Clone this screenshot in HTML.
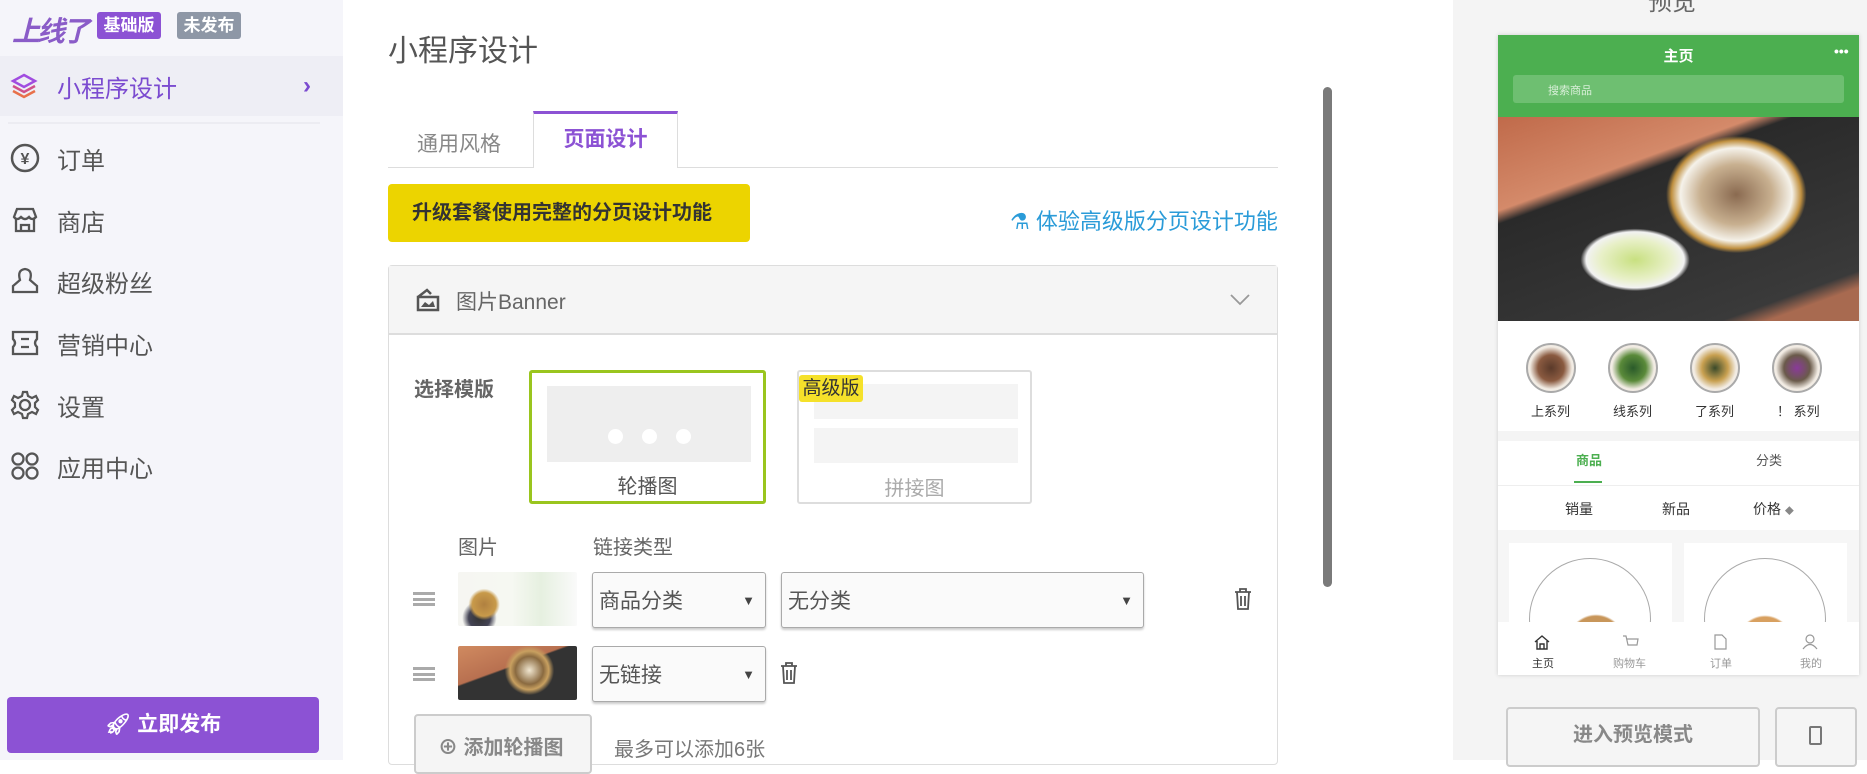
<!DOCTYPE html>
<html><head><meta charset="utf-8"><style>
*{box-sizing:border-box;margin:0;padding:0}
body{width:1867px;height:760px;overflow:hidden;background:#fff;font-family:"Liberation Sans","Noto Sans CJK SC",sans-serif;position:relative;color:#555}
.a{position:absolute}
#side{left:0;top:0;width:343px;height:760px;background:#f5f5fa}
.item{position:absolute;left:0;width:343px;height:60px;display:flex;align-items:center;font-size:24px;color:#555}
.item svg{position:absolute;left:10px}
.item span{position:absolute;left:57px}
#right{left:1453px;top:0;width:414px;height:760px;background:#f4f4f4}
.sel{position:absolute;border:1px solid #aaa;border-radius:3px;background:#fafafa;box-shadow:0 2px 2px #ccc;font-size:21px;color:#555;padding-left:6px;display:flex;align-items:center}
.sel:after{content:"▼";position:absolute;right:10px;font-size:13px;color:#444}
</style></head><body>
<div id="side" class="a">
 <div class="a" style="left:12px;top:10px;font-size:28px;font-weight:bold;font-style:italic;color:#8a5cc8;letter-spacing:-3px">上线了</div>
 <div class="a" style="left:97px;top:12px;width:64px;height:27px;background:#8c52d4;border-radius:3px;color:#fff;font-size:17px;font-weight:bold;text-align:center;line-height:27px">基础版</div>
 <div class="a" style="left:177px;top:12px;width:64px;height:27px;background:#8e97a6;border-radius:3px;color:#fff;font-size:17px;font-weight:bold;text-align:center;line-height:27px">未发布</div>
 <div class="item" style="top:56px;height:60px;background:#eeeef5;color:#7b4bd0"><svg width="28" height="28" viewBox="0 0 28 28"><path d="M14 3 L25 9 L14 15 L3 9Z" fill="none" stroke="#a04ce0" stroke-width="2.5"/><path d="M3 14 L14 20 L25 14" fill="none" stroke="#d0508a" stroke-width="2.5"/><path d="M3 19 L14 25 L25 19" fill="none" stroke="#e8704a" stroke-width="2.5"/></svg><span style="color:#7b4bd0">小程序设计</span><b style="position:absolute;left:303px;color:#7b4bd0;font-size:24px">›</b></div>
 <div class="a" style="left:8px;top:122px;width:312px;height:2px;background:#ececf2"></div>
 <div class="item" style="top:128px"><svg width="30" height="30" viewBox="0 0 30 30"><circle cx="15" cy="15" r="13" fill="none" stroke="#555" stroke-width="2.5"/><text x="15" y="21" font-size="16" text-anchor="middle" fill="#555" font-weight="bold">¥</text></svg><span>订单</span></div>
 <div class="item" style="top:190px"><svg width="30" height="30" viewBox="0 0 30 30"><path d="M4 12 L7 4 H23 L26 12 Q22 16 19 12 Q15 16 11 12 Q7 16 4 12Z M6 14 V26 H24 V14 M11 26 V20 H19 V26" fill="none" stroke="#555" stroke-width="2.3"/></svg><span>商店</span></div>
 <div class="item" style="top:251px"><svg width="30" height="30" viewBox="0 0 30 30"><path d="M10 14 Q7 4 15 3 Q23 4 20 14 L27 20 V26 H3 V20Z" fill="none" stroke="#555" stroke-width="2.3"/></svg><span>超级粉丝</span></div>
 <div class="item" style="top:313px"><svg width="30" height="30" viewBox="0 0 30 30"><path d="M3 4 H27 V11 Q23 15 27 19 V26 H3 V19 Q7 15 3 11Z M11 11 H19 M11 19 H19" fill="none" stroke="#555" stroke-width="2.3"/></svg><span>营销中心</span></div>
 <div class="item" style="top:375px"><svg width="30" height="30" viewBox="0 0 30 30"><circle cx="15" cy="15" r="5" fill="none" stroke="#555" stroke-width="2.3"/><path d="M13 2 H17 L18 6 L22 8 L26 6 L28 10 L25 13 V17 L28 20 L26 24 L22 22 L18 24 L17 28 H13 L12 24 L8 22 L4 24 L2 20 L5 17 V13 L2 10 L4 6 L8 8 L12 6Z" fill="none" stroke="#555" stroke-width="2.2"/></svg><span>设置</span></div>
 <div class="item" style="top:436px"><svg width="30" height="30" viewBox="0 0 30 30"><circle cx="8" cy="8" r="5.5" fill="none" stroke="#555" stroke-width="2.3"/><circle cx="22" cy="8" r="5.5" fill="none" stroke="#555" stroke-width="2.3"/><circle cx="8" cy="22" r="5.5" fill="none" stroke="#555" stroke-width="2.3"/><circle cx="22" cy="22" r="5.5" fill="none" stroke="#555" stroke-width="2.3"/></svg><span>应用中心</span></div>
 <div class="a" style="left:7px;top:697px;width:312px;height:56px;background:#8c52d4;border-radius:4px;color:#fff;font-size:21px;font-weight:bold;text-align:center;line-height:56px">🚀︎ 立即发布</div>
</div>

<div class="a" style="left:388px;top:26px;font-size:30px;color:#555">小程序设计</div>
<div class="a" style="left:388px;top:167px;width:890px;height:1px;background:#ddd"></div>
<div class="a" style="left:417px;top:128px;font-size:21px;color:#888">通用风格</div>
<div class="a" style="left:533px;top:111px;width:145px;height:57px;background:#fff;border:1px solid #ddd;border-top:3px solid #8c52d4;border-bottom:none;font-size:21px;font-weight:bold;color:#8c52d4;text-align:center;line-height:52px">页面设计</div>
<div class="a" style="left:388px;top:184px;width:362px;height:58px;background:#ecd400;border-radius:4px;font-size:20px;font-weight:bold;color:#333;padding-left:24px;line-height:58px">升级套餐使用完整的分页设计功能</div>
<div class="a" style="left:1010px;top:204px;font-size:22px;color:#2a9bd8">⚗︎ 体验高级版分页设计功能</div>

<div class="a" style="left:388px;top:265px;width:890px;height:500px;border:1px solid #ddd;border-radius:4px">
 <div style="height:69px;background:#f5f5f5;border-bottom:2px solid #ddd;position:relative">
  <svg class="a" style="left:26px;top:22px" width="26" height="24" viewBox="0 0 26 24"><path d="M3 9 H23 V22 H3Z M3 9 L12 2 L16 6" fill="none" stroke="#555" stroke-width="2.5"/><path d="M6 19 L10 14 L14 17 L18 13 L20 19Z" fill="#555"/></svg>
  <div class="a" style="left:67px;top:20px;font-size:21px;color:#666">图片Banner</div>
  <svg class="a" style="left:840px;top:27px" width="22" height="14"><path d="M2 2 L11 11 L20 2" fill="none" stroke="#999" stroke-width="1.8"/></svg>
 </div>
</div>
<div class="a" style="left:414px;top:373px;font-size:20px;font-weight:bold;color:#666">选择模版</div>
<div class="a" style="left:529px;top:370px;width:237px;height:134px;border:3px solid #9ac51e;border-radius:3px;background:#fff">
 <div class="a" style="left:15px;top:13px;width:204px;height:76px;background:#eee"></div>
 <div class="a" style="left:76px;top:56px;width:15px;height:15px;border-radius:50%;background:#fff"></div>
 <div class="a" style="left:110px;top:56px;width:15px;height:15px;border-radius:50%;background:#fff"></div>
 <div class="a" style="left:144px;top:56px;width:15px;height:15px;border-radius:50%;background:#fff"></div>
 <div class="a" style="left:0;width:231px;top:97px;text-align:center;font-size:20px;color:#555">轮播图</div>
</div>
<div class="a" style="left:797px;top:370px;width:235px;height:134px;border:2px solid #ddd;border-radius:3px;background:#fff">
 <div class="a" style="left:15px;top:12px;width:204px;height:35px;background:#f4f4f4"></div>
 <div class="a" style="left:15px;top:56px;width:204px;height:35px;background:#f4f4f4"></div>
 <div class="a" style="left:0;top:3px;width:64px;height:27px;background:#f5e12a;border-radius:3px;font-size:19px;color:#333;text-align:center;line-height:27px">高级版</div>
 <div class="a" style="left:0;width:231px;top:100px;text-align:center;font-size:20px;color:#aaa">拼接图</div>
</div>
<div class="a" style="left:458px;top:531px;font-size:20px;color:#666">图片</div>
<div class="a" style="left:593px;top:531px;font-size:20px;color:#666">链接类型</div>
<div class="a" style="left:413px;top:592px;width:22px;height:14px;border-top:3px solid #aaa;border-bottom:3px solid #aaa"><div style="margin-top:3px;height:3px;background:#aaa"></div></div>
<div class="a" style="left:458px;top:572px;width:119px;height:54px;background:radial-gradient(circle at 22% 60%,#b08040 0,#c89a4a 12%,transparent 16%),radial-gradient(circle at 18% 85%,#333 0,#445 10%,transparent 16%),linear-gradient(90deg,#f6f6f2,#f6f8f2 45%,#e6f0e0 70%,#fafafa);border-radius:2px"></div>
<div class="sel" style="left:592px;top:572px;width:174px;height:56px">商品分类</div>
<div class="sel" style="left:781px;top:572px;width:363px;height:56px">无分类</div>
<svg class="a" style="left:1234px;top:588px" width="18" height="22" viewBox="0 0 18 22"><path d="M1 4 H17 M6 4 V1 H12 V4 M3 4 L4 21 H14 L15 4 M7 8 V18 M11 8 V18" fill="none" stroke="#555" stroke-width="1.8"/></svg>
<div class="a" style="left:413px;top:667px;width:22px;height:14px;border-top:3px solid #aaa;border-bottom:3px solid #aaa"><div style="margin-top:3px;height:3px;background:#aaa"></div></div>
<div class="a" style="left:458px;top:646px;width:119px;height:54px;background:radial-gradient(circle at 60% 45%,#f0e6d0 0,#8a6a40 18%,#c8a060 25%,transparent 32%),linear-gradient(160deg,#d08a60 0,#b87050 40%,#333 42%,#333);border-radius:2px"></div>
<div class="sel" style="left:592px;top:646px;width:174px;height:56px">无链接</div>
<svg class="a" style="left:780px;top:662px" width="18" height="22" viewBox="0 0 18 22"><path d="M1 4 H17 M6 4 V1 H12 V4 M3 4 L4 21 H14 L15 4 M7 8 V18 M11 8 V18" fill="none" stroke="#555" stroke-width="1.8"/></svg>
<div class="a" style="left:414px;top:714px;width:178px;height:60px;border:2px solid #ccc;border-radius:4px;background:#f5f5f5;font-size:20px;font-weight:bold;color:#888;padding:15px 0 0 22px">⊕ 添加轮播图</div>
<div class="a" style="left:614px;top:733px;font-size:20px;color:#777">最多可以添加6张</div>
<div class="a" style="left:1323px;top:87px;width:9px;height:500px;background:#7a7a7a;border-radius:5px"></div>

<div id="right" class="a">
 <div class="a" style="left:195px;top:-18px;font-size:24px;color:#666">预览</div>
 <div class="a" style="left:45px;top:35px;width:361px;height:640px;background:#fff;box-shadow:0 0 4px #ccc;overflow:hidden">
  <div class="a" style="left:0;top:0;width:361px;height:82px;background:#4caf50"></div>
  <div class="a" style="left:0;top:10px;width:361px;text-align:center;color:#fff;font-size:15px;font-weight:bold">主页</div>
  <div class="a" style="left:336px;top:8px;color:#fff;font-size:14px;font-weight:bold">•••</div>
  <div class="a" style="left:15px;top:40px;width:331px;height:28px;background:#6ebf71;border-radius:3px;font-size:11px;color:#d8efd8;padding:7px 0 0 35px">搜索商品</div>
  <div class="a" style="left:0;top:82px;width:361px;height:204px;background:radial-gradient(ellipse 90px 75px at 66% 38%,#8a6a50 0,#c8b090 40%,#f5f2ea 62%,#c09040 72%,transparent 78%),radial-gradient(ellipse 70px 40px at 38% 70%,#c8e080 0,#e8f0c8 50%,#f2f2f2 70%,transparent 78%),linear-gradient(160deg,#c06a4a 0,#d48a6a 28%,#2a2a2a 32%,#3a3a3a 85%,#a86a50 90%)"></div>
  <div class="a" style="left:0;top:286px;width:361px;height:110px;background:#fff"></div>
  <div class="a" style="left:28px;top:308px;width:50px;height:50px;border-radius:50%;border:2px solid #aaa;background:radial-gradient(#5a3a2a 0,#8a5a40 40%,#f2ece4 65%)"></div>
  <div class="a" style="left:110px;top:308px;width:50px;height:50px;border-radius:50%;border:2px solid #aaa;background:radial-gradient(#2a5a2a 0,#5a8a3a 40%,#f2ece4 65%)"></div>
  <div class="a" style="left:192px;top:308px;width:50px;height:50px;border-radius:50%;border:2px solid #aaa;background:radial-gradient(#3a4a2a 0,#c8a050 40%,#f2ece4 65%)"></div>
  <div class="a" style="left:274px;top:308px;width:50px;height:50px;border-radius:50%;border:2px solid #aaa;background:radial-gradient(#8a3a9a 0,#6a5a4a 40%,#f2ece4 65%)"></div>
  <div class="a" style="left:33px;top:366px;font-size:13px;color:#333">上系列</div>
  <div class="a" style="left:115px;top:366px;font-size:13px;color:#333">线系列</div>
  <div class="a" style="left:197px;top:366px;font-size:13px;color:#333">了系列</div>
  <div class="a" style="left:279px;top:366px;font-size:13px;color:#333">！ 系列</div>
  <div class="a" style="left:0;top:396px;width:361px;height:10px;background:#f4f4f4"></div>
  <div class="a" style="left:78px;top:415px;font-size:13px;color:#4caf50;font-weight:bold">商品</div>
  <div class="a" style="left:76px;top:446px;width:28px;height:2px;background:#4caf50"></div>
  <div class="a" style="left:258px;top:415px;font-size:13px;color:#555">分类</div>
  <div class="a" style="left:0;top:450px;width:361px;height:1px;background:#eee"></div>
  <div class="a" style="left:67px;top:464px;font-size:14px;color:#333">销量</div>
  <div class="a" style="left:164px;top:464px;font-size:14px;color:#333">新品</div>
  <div class="a" style="left:255px;top:464px;font-size:14px;color:#333">价格 <span style="font-size:9px;color:#888">◆</span></div>
  <div class="a" style="left:0;top:495px;width:361px;height:127px;background:#f6f6f6"></div>
  <div class="a" style="left:11px;top:508px;width:163px;height:120px;background:#fff"><div class="a" style="left:20px;top:15px;width:122px;height:122px;border-radius:50%;border:1px solid #aaa;background:radial-gradient(circle at 55% 70%,#c8965a 0,#c8965a 25%,#fff 27%)"></div></div>
  <div class="a" style="left:186px;top:508px;width:163px;height:120px;background:#fff"><div class="a" style="left:20px;top:15px;width:122px;height:122px;border-radius:50%;border:1px solid #aaa;background:radial-gradient(circle at 50% 70%,#d8a060 0,#d8a060 25%,#fff 27%)"></div></div>
  <div class="a" style="left:0;top:587px;width:361px;height:53px;background:#fff"></div>
  <div class="a" style="left:34px;top:620px;font-size:11px;color:#333">主页</div>
  <div class="a" style="left:115px;top:620px;font-size:11px;color:#999">购物车</div>
  <div class="a" style="left:212px;top:620px;font-size:11px;color:#999">订单</div>
  <div class="a" style="left:302px;top:620px;font-size:11px;color:#999">我的</div>
  <svg class="a" style="left:35px;top:599px" width="18" height="16"><path d="M2 8 L9 2 L16 8 M4 7 V15 H14 V7 M7 15 V10 H11 V15" fill="none" stroke="#333" stroke-width="1.4"/></svg>
  <svg class="a" style="left:124px;top:599px" width="18" height="16"><path d="M1 2 H4 L6 11 H15 L16 5 H5" fill="none" stroke="#999" stroke-width="1.2"/></svg>
  <svg class="a" style="left:214px;top:599px" width="16" height="16"><path d="M3 1 H10 L14 5 V15 H3Z" fill="none" stroke="#999" stroke-width="1.2"/></svg>
  <svg class="a" style="left:304px;top:599px" width="16" height="16"><circle cx="8" cy="5" r="4" fill="none" stroke="#999" stroke-width="1.2"/><path d="M1 15 Q8 6 15 15" fill="none" stroke="#999" stroke-width="1.2"/></svg>
 </div>
 <div class="a" style="left:53px;top:707px;width:254px;height:60px;border:2px solid #ccc;border-radius:4px;background:#f5f5f5;font-size:20px;font-weight:bold;color:#888;text-align:center;line-height:52px">进入预览模式</div>
 <div class="a" style="left:322px;top:707px;width:82px;height:60px;border:2px solid #ccc;border-radius:4px;background:#f5f5f5"><div class="a" style="left:32px;top:17px;width:13px;height:19px;border:2px solid #777;border-radius:2px"></div></div>
</div>
</body></html>
